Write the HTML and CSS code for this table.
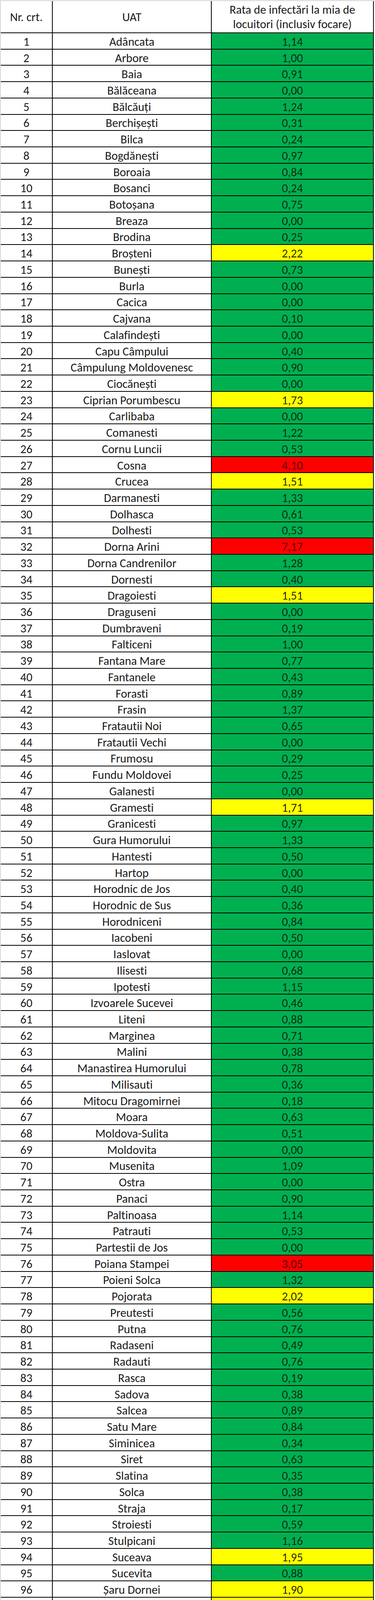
FILE: index.html
```html
<!DOCTYPE html>
<html lang="ro">
<head>
<meta charset="utf-8">
<title>Rata de infectări la mia de locuitori</title>
<link rel="stylesheet" href="styles.css">
</head>
<body>
<div class="sheet">
<div class="row head"><div class="c nr">Nr. crt.</div><div class="c uat">UAT</div><div class="c val">Rata de infectări la mia de<br>locuitori (inclusiv focare)</div></div>
<div class="row"><div class="c nr">1</div><div class="c uat">Adâncata</div><div class="c val g">1,14</div></div>
<div class="row"><div class="c nr">2</div><div class="c uat">Arbore</div><div class="c val g">1,00</div></div>
<div class="row"><div class="c nr">3</div><div class="c uat">Baia</div><div class="c val g">0,91</div></div>
<div class="row"><div class="c nr">4</div><div class="c uat">Bălăceana</div><div class="c val g">0,00</div></div>
<div class="row"><div class="c nr">5</div><div class="c uat">Bălcăuți</div><div class="c val g">1,24</div></div>
<div class="row"><div class="c nr">6</div><div class="c uat">Berchișești</div><div class="c val g">0,31</div></div>
<div class="row"><div class="c nr">7</div><div class="c uat">Bilca</div><div class="c val g">0,24</div></div>
<div class="row"><div class="c nr">8</div><div class="c uat">Bogdănești</div><div class="c val g">0,97</div></div>
<div class="row"><div class="c nr">9</div><div class="c uat">Boroaia</div><div class="c val g">0,84</div></div>
<div class="row"><div class="c nr">10</div><div class="c uat">Bosanci</div><div class="c val g">0,24</div></div>
<div class="row"><div class="c nr">11</div><div class="c uat">Botoșana</div><div class="c val g">0,75</div></div>
<div class="row"><div class="c nr">12</div><div class="c uat">Breaza</div><div class="c val g">0,00</div></div>
<div class="row"><div class="c nr">13</div><div class="c uat">Brodina</div><div class="c val g">0,25</div></div>
<div class="row"><div class="c nr">14</div><div class="c uat">Broșteni</div><div class="c val y">2,22</div></div>
<div class="row"><div class="c nr">15</div><div class="c uat">Bunești</div><div class="c val g">0,73</div></div>
<div class="row"><div class="c nr">16</div><div class="c uat">Burla</div><div class="c val g">0,00</div></div>
<div class="row"><div class="c nr">17</div><div class="c uat">Cacica</div><div class="c val g">0,00</div></div>
<div class="row"><div class="c nr">18</div><div class="c uat">Cajvana</div><div class="c val g">0,10</div></div>
<div class="row"><div class="c nr">19</div><div class="c uat">Calafindești</div><div class="c val g">0,00</div></div>
<div class="row"><div class="c nr">20</div><div class="c uat">Capu Câmpului</div><div class="c val g">0,40</div></div>
<div class="row"><div class="c nr">21</div><div class="c uat">Câmpulung Moldovenesc</div><div class="c val g">0,90</div></div>
<div class="row"><div class="c nr">22</div><div class="c uat">Ciocănești</div><div class="c val g">0,00</div></div>
<div class="row"><div class="c nr">23</div><div class="c uat">Ciprian Porumbescu</div><div class="c val y">1,73</div></div>
<div class="row"><div class="c nr">24</div><div class="c uat">Carlibaba</div><div class="c val g">0,00</div></div>
<div class="row"><div class="c nr">25</div><div class="c uat">Comanesti</div><div class="c val g">1,22</div></div>
<div class="row"><div class="c nr">26</div><div class="c uat">Cornu Luncii</div><div class="c val g">0,53</div></div>
<div class="row"><div class="c nr">27</div><div class="c uat">Cosna</div><div class="c val r">4,10</div></div>
<div class="row"><div class="c nr">28</div><div class="c uat">Crucea</div><div class="c val y">1,51</div></div>
<div class="row"><div class="c nr">29</div><div class="c uat">Darmanesti</div><div class="c val g">1,33</div></div>
<div class="row"><div class="c nr">30</div><div class="c uat">Dolhasca</div><div class="c val g">0,61</div></div>
<div class="row"><div class="c nr">31</div><div class="c uat">Dolhesti</div><div class="c val g">0,53</div></div>
<div class="row"><div class="c nr">32</div><div class="c uat">Dorna Arini</div><div class="c val r">7,17</div></div>
<div class="row"><div class="c nr">33</div><div class="c uat">Dorna Candrenilor</div><div class="c val g">1,28</div></div>
<div class="row"><div class="c nr">34</div><div class="c uat">Dornesti</div><div class="c val g">0,40</div></div>
<div class="row"><div class="c nr">35</div><div class="c uat">Dragoiesti</div><div class="c val y">1,51</div></div>
<div class="row"><div class="c nr">36</div><div class="c uat">Draguseni</div><div class="c val g">0,00</div></div>
<div class="row"><div class="c nr">37</div><div class="c uat">Dumbraveni</div><div class="c val g">0,19</div></div>
<div class="row"><div class="c nr">38</div><div class="c uat">Falticeni</div><div class="c val g">1,00</div></div>
<div class="row"><div class="c nr">39</div><div class="c uat">Fantana Mare</div><div class="c val g">0,77</div></div>
<div class="row"><div class="c nr">40</div><div class="c uat">Fantanele</div><div class="c val g">0,43</div></div>
<div class="row"><div class="c nr">41</div><div class="c uat">Forasti</div><div class="c val g">0,89</div></div>
<div class="row"><div class="c nr">42</div><div class="c uat">Frasin</div><div class="c val g">1,37</div></div>
<div class="row"><div class="c nr">43</div><div class="c uat">Fratautii Noi</div><div class="c val g">0,65</div></div>
<div class="row"><div class="c nr">44</div><div class="c uat">Fratautii Vechi</div><div class="c val g">0,00</div></div>
<div class="row"><div class="c nr">45</div><div class="c uat">Frumosu</div><div class="c val g">0,29</div></div>
<div class="row"><div class="c nr">46</div><div class="c uat">Fundu Moldovei</div><div class="c val g">0,25</div></div>
<div class="row"><div class="c nr">47</div><div class="c uat">Galanesti</div><div class="c val g">0,00</div></div>
<div class="row"><div class="c nr">48</div><div class="c uat">Gramesti</div><div class="c val y">1,71</div></div>
<div class="row"><div class="c nr">49</div><div class="c uat">Granicesti</div><div class="c val g">0,97</div></div>
<div class="row"><div class="c nr">50</div><div class="c uat">Gura Humorului</div><div class="c val g">1,33</div></div>
<div class="row"><div class="c nr">51</div><div class="c uat">Hantesti</div><div class="c val g">0,50</div></div>
<div class="row"><div class="c nr">52</div><div class="c uat">Hartop</div><div class="c val g">0,00</div></div>
<div class="row"><div class="c nr">53</div><div class="c uat">Horodnic de Jos</div><div class="c val g">0,40</div></div>
<div class="row"><div class="c nr">54</div><div class="c uat">Horodnic de Sus</div><div class="c val g">0,36</div></div>
<div class="row"><div class="c nr">55</div><div class="c uat">Horodniceni</div><div class="c val g">0,84</div></div>
<div class="row"><div class="c nr">56</div><div class="c uat">Iacobeni</div><div class="c val g">0,50</div></div>
<div class="row"><div class="c nr">57</div><div class="c uat">Iaslovat</div><div class="c val g">0,00</div></div>
<div class="row"><div class="c nr">58</div><div class="c uat">Ilisesti</div><div class="c val g">0,68</div></div>
<div class="row"><div class="c nr">59</div><div class="c uat">Ipotesti</div><div class="c val g">1,15</div></div>
<div class="row"><div class="c nr">60</div><div class="c uat">Izvoarele Sucevei</div><div class="c val g">0,46</div></div>
<div class="row"><div class="c nr">61</div><div class="c uat">Liteni</div><div class="c val g">0,88</div></div>
<div class="row"><div class="c nr">62</div><div class="c uat">Marginea</div><div class="c val g">0,71</div></div>
<div class="row"><div class="c nr">63</div><div class="c uat">Malini</div><div class="c val g">0,38</div></div>
<div class="row"><div class="c nr">64</div><div class="c uat">Manastirea Humorului</div><div class="c val g">0,78</div></div>
<div class="row"><div class="c nr">65</div><div class="c uat">Milisauti</div><div class="c val g">0,36</div></div>
<div class="row"><div class="c nr">66</div><div class="c uat">Mitocu Dragomirnei</div><div class="c val g">0,18</div></div>
<div class="row"><div class="c nr">67</div><div class="c uat">Moara</div><div class="c val g">0,63</div></div>
<div class="row"><div class="c nr">68</div><div class="c uat">Moldova-Sulita</div><div class="c val g">0,51</div></div>
<div class="row"><div class="c nr">69</div><div class="c uat">Moldovita</div><div class="c val g">0,00</div></div>
<div class="row"><div class="c nr">70</div><div class="c uat">Musenita</div><div class="c val g">1,09</div></div>
<div class="row"><div class="c nr">71</div><div class="c uat">Ostra</div><div class="c val g">0,00</div></div>
<div class="row"><div class="c nr">72</div><div class="c uat">Panaci</div><div class="c val g">0,90</div></div>
<div class="row"><div class="c nr">73</div><div class="c uat">Paltinoasa</div><div class="c val g">1,14</div></div>
<div class="row"><div class="c nr">74</div><div class="c uat">Patrauti</div><div class="c val g">0,53</div></div>
<div class="row"><div class="c nr">75</div><div class="c uat">Partestii de Jos</div><div class="c val g">0,00</div></div>
<div class="row"><div class="c nr">76</div><div class="c uat">Poiana Stampei</div><div class="c val r">3,05</div></div>
<div class="row"><div class="c nr">77</div><div class="c uat">Poieni Solca</div><div class="c val g">1,32</div></div>
<div class="row"><div class="c nr">78</div><div class="c uat">Pojorata</div><div class="c val y">2,02</div></div>
<div class="row"><div class="c nr">79</div><div class="c uat">Preutesti</div><div class="c val g">0,56</div></div>
<div class="row"><div class="c nr">80</div><div class="c uat">Putna</div><div class="c val g">0,76</div></div>
<div class="row"><div class="c nr">81</div><div class="c uat">Radaseni</div><div class="c val g">0,49</div></div>
<div class="row"><div class="c nr">82</div><div class="c uat">Radauti</div><div class="c val g">0,76</div></div>
<div class="row"><div class="c nr">83</div><div class="c uat">Rasca</div><div class="c val g">0,19</div></div>
<div class="row"><div class="c nr">84</div><div class="c uat">Sadova</div><div class="c val g">0,38</div></div>
<div class="row"><div class="c nr">85</div><div class="c uat">Salcea</div><div class="c val g">0,89</div></div>
<div class="row"><div class="c nr">86</div><div class="c uat">Satu Mare</div><div class="c val g">0,84</div></div>
<div class="row"><div class="c nr">87</div><div class="c uat">Siminicea</div><div class="c val g">0,34</div></div>
<div class="row"><div class="c nr">88</div><div class="c uat">Siret</div><div class="c val g">0,63</div></div>
<div class="row"><div class="c nr">89</div><div class="c uat">Slatina</div><div class="c val g">0,35</div></div>
<div class="row"><div class="c nr">90</div><div class="c uat">Solca</div><div class="c val g">0,38</div></div>
<div class="row"><div class="c nr">91</div><div class="c uat">Straja</div><div class="c val g">0,17</div></div>
<div class="row"><div class="c nr">92</div><div class="c uat">Stroiesti</div><div class="c val g">0,59</div></div>
<div class="row"><div class="c nr">93</div><div class="c uat">Stulpicani</div><div class="c val g">1,16</div></div>
<div class="row"><div class="c nr">94</div><div class="c uat">Suceava</div><div class="c val y">1,95</div></div>
<div class="row"><div class="c nr">95</div><div class="c uat">Sucevita</div><div class="c val g">0,88</div></div>
<div class="row"><div class="c nr">96</div><div class="c uat">Șaru Dornei</div><div class="c val y">1,90</div></div>
<div class="row"><div class="c nr">97</div><div class="c uat">Șcheia</div><div class="c val y">1,70</div></div>
<div class="row"><div class="c nr">98</div><div class="c uat">Șerbauti</div><div class="c val g">0,00</div></div>
<div class="row"><div class="c nr">99</div><div class="c uat">Todiresti</div><div class="c val y">1,79</div></div>
<div class="row"><div class="c nr">100</div><div class="c uat">Udesti</div><div class="c val g">0,36</div></div>
<div class="row"><div class="c nr">101</div><div class="c uat">Ulma</div><div class="c val g">0,45</div></div>
<div class="row"><div class="c nr">102</div><div class="c uat">Vadu Moldovei</div><div class="c val g">0,44</div></div>
<div class="row"><div class="c nr">103</div><div class="c uat">Valea Moldovei</div><div class="c val g">0,21</div></div>
<div class="row"><div class="c nr">104</div><div class="c uat">Vama</div><div class="c val g">0,32</div></div>
<div class="row"><div class="c nr">105</div><div class="c uat">Vatra Dornei</div><div class="c val r">3,39</div></div>
<div class="row"><div class="c nr">106</div><div class="c uat">Vatra Moldovitei</div><div class="c val g">0,23</div></div>
<div class="row"><div class="c nr">107</div><div class="c uat">Veresti</div><div class="c val g">0,53</div></div>
<div class="row"><div class="c nr">108</div><div class="c uat">Vicovu de Jos</div><div class="c val g">0,14</div></div>
<div class="row"><div class="c nr">109</div><div class="c uat">Vicovu de Sus</div><div class="c val g">0,23</div></div>
<div class="row"><div class="c nr">110</div><div class="c uat">Voitinel</div><div class="c val g">0,18</div></div>
<div class="row"><div class="c nr">111</div><div class="c uat">Volovat</div><div class="c val g">0,79</div></div>
<div class="row"><div class="c nr">112</div><div class="c uat">Vulturesti</div><div class="c val g">1,11</div></div>
<div class="row"><div class="c nr">113</div><div class="c uat">Zamostea</div><div class="c val g">0,33</div></div>
<div class="row"><div class="c nr">114</div><div class="c uat">Zvoristea</div><div class="c val g">1,13</div></div>
<div class="row blank"><div class="c nr"></div><div class="c uat"></div><div class="c val"></div></div>
<div class="row total"><div class="c nr"></div><div class="c uat">Total</div><div class="c val o">1,00</div></div>
</div>
</body>
</html>
```

FILE: styles.css
```css
html, body {
  margin: 0;
  padding: 0;
  background: #ffffff;
}

body {
  font-family: Carlito, Calibri, Lato, "Liberation Sans", sans-serif;
  color: #1b1b1b;
  font-variant-ligatures: none;
  font-feature-settings: "liga" 0, "clig" 0;
}

.sheet {
  width: 960px;
  height: 4931px;
  overflow: hidden;
  box-sizing: border-box;
  border-top: 3px solid #e1e1e1;
  border-left: 2px solid #d6d6d6;
  display: grid;
  grid-template-columns: 133px 407px 415px;
  grid-template-rows: 82px repeat(114, 41.73px) 41px 47.8px;
}

.row {
  display: contents;
}

.c {
  display: flex;
  align-items: center;
  justify-content: center;
  min-height: 0;
  min-width: 0;
  overflow: hidden;
  box-sizing: border-box;
  border-right: 2px solid #000;
  border-bottom: 2px solid #000;
  font-size: 30.5px;
  line-height: 30px;
  text-align: center;
  white-space: nowrap;
  padding-top: 4px;
}

.head .c {
  padding-top: 0;
  line-height: 37px;
}

.g { background: #00b050; color: #0b2c14; }
.y { background: #ffff00; color: #2d2d05; }
.r { background: #ff0000; color: #5c0606; }
.o { background: #f6b887; color: #2a1d12; }

.blank .nr,
.blank .uat {
  border-color: #d3d3d3;
}

.blank .val {
  border-bottom: none;
}

.total .nr {
  border-color: #d3d3d3;
}

.total .uat {
  border-right: none;
  border-bottom-color: #d3d3d3;
}

.total .val {
  border: 3px solid #000;
  margin-left: -3px;
  margin-right: -2px;
  padding-top: 2px;
}
```
